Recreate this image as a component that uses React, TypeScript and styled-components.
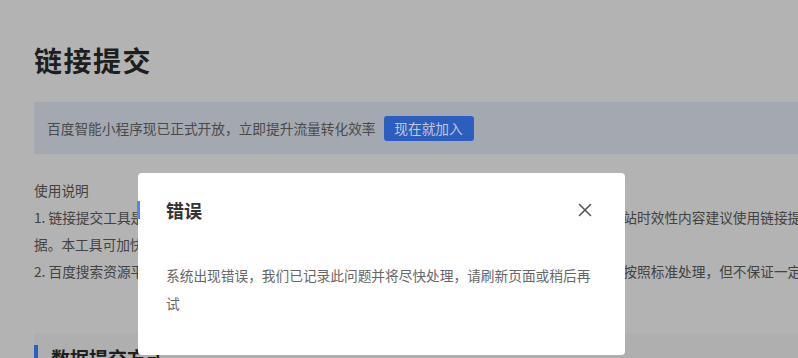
import * as React from "react";
import styled, { createGlobalStyle } from "styled-components";

const GlobalStyle = createGlobalStyle`
  html, body {
    margin: 0;
    padding: 0;
    background: #b3b3b3;
    overflow: hidden;
  }
  body {
    font-family: "Noto Sans CJK SC", "Noto Sans", sans-serif;
    width: 798px;
    height: 358px;
  }
`;

const PageStyled = styled.main`
  width: 938px;
  padding: 40px 0 0 34px;
`;

const Title = styled.h1`
  margin: 0;
  font-size: 28px;
  line-height: 40px;
  letter-spacing: 1.5px;
  font-weight: 700;
  color: #1e1e1e;
`;

const Notice = styled.div`
  margin-top: 22px;
  width: 1000px;
  height: 52px;
  padding-left: 13px;
  display: flex;
  align-items: center;
  gap: 8px;
  background: #a4a8b0;
  box-sizing: border-box;
  font-size: 13.7px;
  color: #4a4a4a;
`;

const JoinButton = styled.button`
  height: 25px;
  width: 90px;
  padding: 0;
  border: none;
  border-radius: 3px;
  background: #2c5ebf;
  color: #c3c8d4;
  font-family: inherit;
  font-size: 13.7px;
  cursor: pointer;
`;

const Guide = styled.section`
  margin-top: 23px;
  font-size: 13.7px;
  line-height: 27px;
  color: #424242;
  p {
    margin: 0;
  }
`;

const Panel = styled.section`
  margin-top: 48px;
  width: 1000px;
  height: 60px;
  background: #afafaf;
  padding-top: 12px;
  box-sizing: border-box;
`;

const PanelTitle = styled.h3`
  margin: 0;
  padding-left: 13px;
  border-left: 4px solid #2d5dbf;
  font-size: 19px;
  line-height: 26px;
  font-weight: 700;
  color: #1e1e1e;
`;

const Mask = styled.div`
  position: fixed;
  inset: 0;
`;

const Dialog = styled.div`
  position: absolute;
  left: 138px;
  top: 173px;
  width: 487px;
  height: 182px;
  box-sizing: border-box;
  padding: 24px 30px 0 28px;
  background: #fff;
  border-radius: 4px;
`;

const DialogHead = styled.div`
  position: relative;
  display: flex;
  align-items: center;
  justify-content: space-between;
  height: 26px;
  &::before {
    content: "";
    position: absolute;
    left: -29px;
    top: 4px;
    width: 3px;
    height: 18px;
    background: #4a86ff;
  }
`;

const DialogTitle = styled.h2`
  margin: 0;
  font-size: 18px;
  line-height: 26px;
  font-weight: 600;
  color: #333;
`;

const CloseButton = styled.button`
  margin-right: 3px;
  width: 14px;
  height: 14px;
  padding: 0;
  border: none;
  background: none;
  display: flex;
  align-items: center;
  justify-content: center;
  cursor: pointer;
`;

const DialogBody = styled.p`
  margin: 38px 0 0;
  font-size: 13.7px;
  line-height: 28px;
  color: #666;
`;

const CloseIcon = () => (
  <svg width="14" height="14" viewBox="0 0 14 14">
    <path d="M1.5 1.5 L12.5 12.5 M12.5 1.5 L1.5 12.5" stroke="#555" strokeWidth="1.6" strokeLinecap="round" />
  </svg>
);

export default function App() {
  return (
    <>
      <GlobalStyle />
      <PageStyled>
        <Title>链接提交</Title>
        <Notice>
          <span>百度智能小程序现已正式开放，立即提升流量转化效率</span>
          <JoinButton>现在就加入</JoinButton>
        </Notice>
        <Guide>
          <p>使用说明</p>
          <p>
            1. 链接提交工具是网站主动向百度搜索推送数据的工具，本工具可缩短爬虫发现网站链接时间，网站时效性内容建议使用链接提交工具，实时向搜索推送数据。本工具可加快爬虫抓取速度，无法解决网站内容是否收录问题
          </p>
          <p>
            2. 百度搜索资源平台为站长提供链接提交通道，您可以提交想被百度收录的链接，百度搜索引擎会按照标准处理，但不保证一定能够收录您提交的链接。
          </p>
        </Guide>
        <Panel>
          <PanelTitle>数据提交方式</PanelTitle>
        </Panel>
      </PageStyled>
      <Mask>
        <Dialog role="dialog">
          <DialogHead>
            <DialogTitle>错误</DialogTitle>
            <CloseButton aria-label="关闭">
              <CloseIcon />
            </CloseButton>
          </DialogHead>
          <DialogBody>系统出现错误，我们已记录此问题并将尽快处理，请刷新页面或稍后再试</DialogBody>
        </Dialog>
      </Mask>
    </>
  );
}
